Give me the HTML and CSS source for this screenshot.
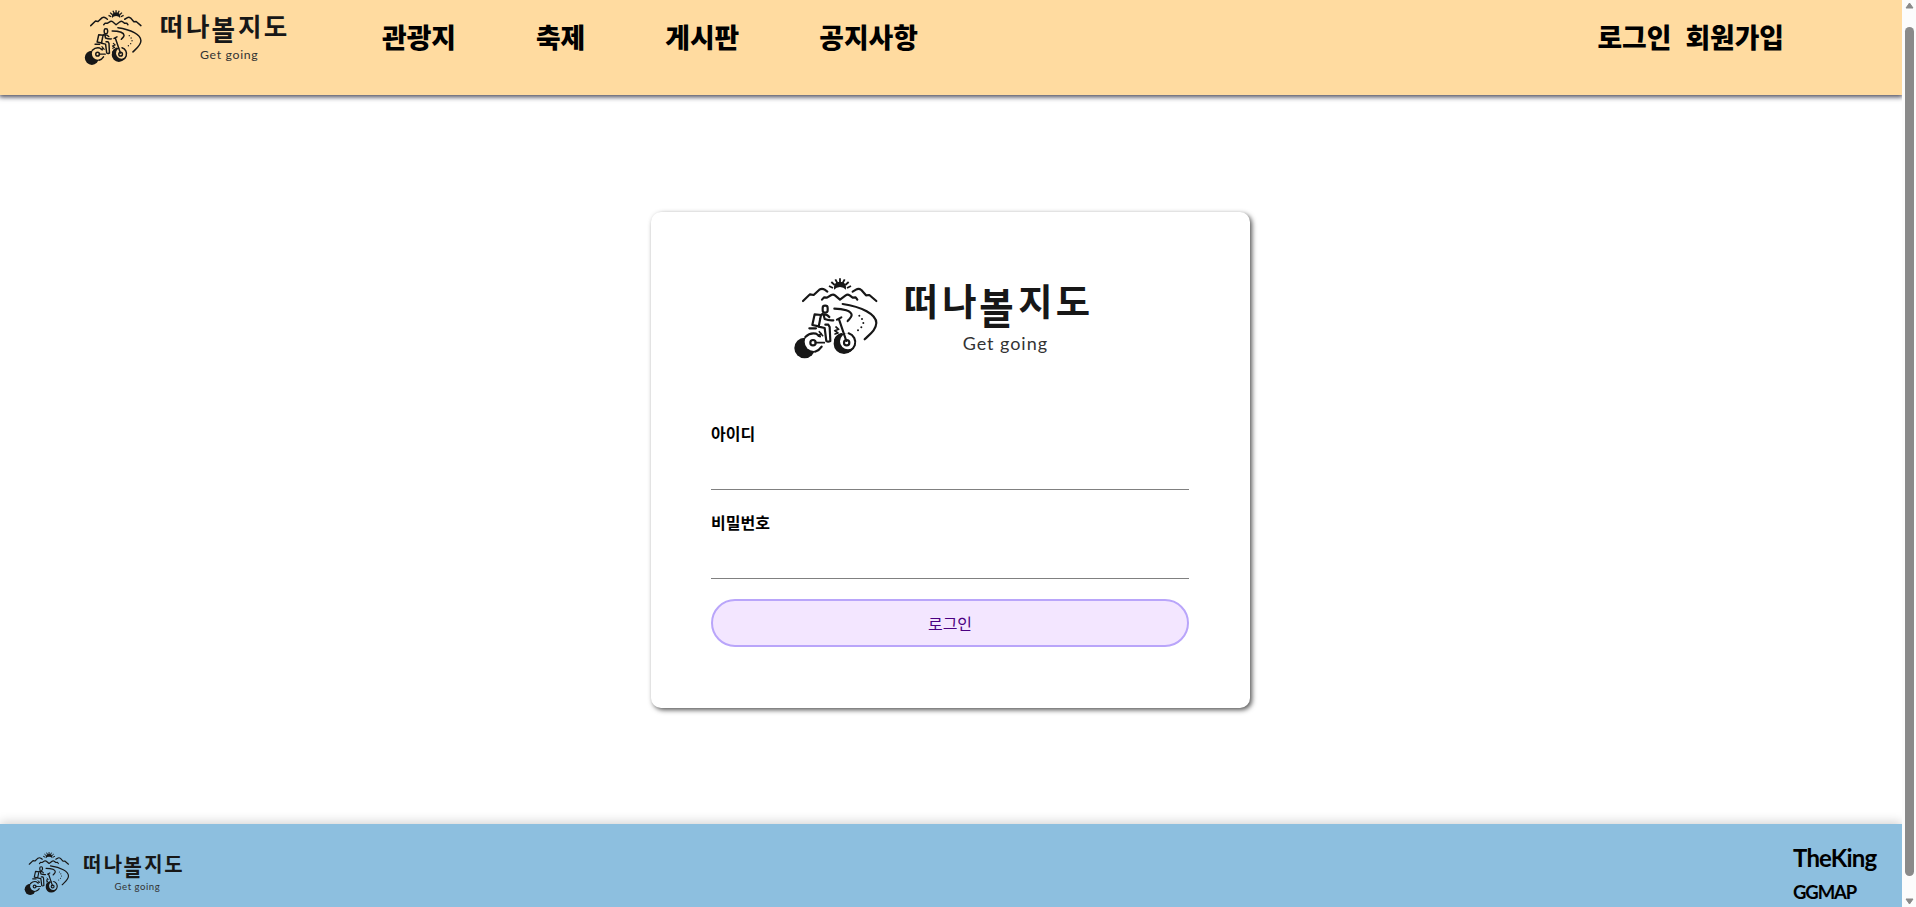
FILE: index.html
```html
<!DOCTYPE html>
<html lang="ko">
<head>
<meta charset="utf-8">
<title>떠나볼지도</title>
<link rel="stylesheet" href="styles.css">
</head>
<body>
<svg class="defs" aria-hidden="true">
  <defs>
    <mask id="rear-cut" maskUnits="userSpaceOnUse" x="0" y="0" width="320" height="315">
      <rect width="320" height="315" fill="#fff"/>
      <circle cx="101" cy="231" r="27" fill="#000"/>
    </mask>
    <mask id="front-cut" maskUnits="userSpaceOnUse" x="0" y="0" width="320" height="315">
      <rect width="320" height="315" fill="#fff"/>
      <circle cx="204" cy="229" r="24" fill="#000"/>
    </mask>
    <symbol id="rider" viewBox="0 0 320 315">
      <g fill="none" stroke="#171717" stroke-width="6.5" stroke-linecap="round" stroke-linejoin="round">
        <path d="M69 108L90 88L101 90L118 74Q126 69 134 74L142 80"/>
        <path d="M126 104L132 97L141 98L154 90Q160 87 165 91L180 104L197 91Q203 87 209 91L218 98L227 97L232 104"/>
        <path d="M218 80L228 74Q236 69 244 75L258 91L268 90L289 108"/>
        <path d="M188 117C245 125 289 148 289 174C288 195 270 207 254 223"/>
        <path d="M163 131C190 131 214 138 215 150C215 159 207 162 203 168"/>
        <rect x="128" y="122" width="15" height="21" rx="7"/>
        <path d="M124 150L104 148L97 180L117 184"/>
        <path d="M128 146Q122 148 121 160L116 185L134 189L139 228Q144 232 151 228L149 186L145 179H136M131 150L134 162Q146 167 160 166M134 148Q143 149 148 156"/>
        <path d="M171 164L184 157M177 163L199 228M88 190H108"/>
        <path d="M106 233H133M118 200L128 212M124 206L115 213M168 186L176 193L164 197L174 204L165 207" stroke-width="5"/>
        <circle cx="99" cy="233" r="8"/>
        <path d="M76 216Q90 202 108 206L120 214M125 245Q118 256 105 260"/>
        <circle cx="200" cy="233" r="8"/>
        <path d="M206 205A28 28 0 1 1 188 258M165 225Q170 211 184 207"/>
      </g>
      <g fill="#171717">
        <circle cx="74" cy="249" r="31" mask="url(#rear-cut)"/>
        <circle cx="192" cy="236" r="31" mask="url(#front-cut)"/>
        <path d="M162 74Q159 50 180 50Q201 50 198 74L190 68L180 66L170 68Z"/>
        <circle cx="238" cy="152" r="3"/><circle cx="246" cy="162" r="3"/><circle cx="250" cy="174" r="3"/><circle cx="244" cy="187" r="3"/><circle cx="234" cy="196" r="3"/>
      </g>
      <path d="M180 54V40M172 54L166 43M188 54L194 43M164 60L154 51M196 60L206 51M159 69L147 63M201 69L213 63" fill="none" stroke="#171717" stroke-width="5.500"/>
    </symbol>
  </defs>
</svg>
<div class="window">
  <div class="page">
    <header class="header">
      <a class="header-logo"><svg class="logo" viewBox="0 0 960 315">
        <use href="#rider" width="320" height="315"/>
        <g class="logo-name"><text x="371" y="152">떠</text><text x="487" y="152">나</text><text transform="translate(598 176) scale(1 1.13)">볼</text><text x="715" y="152">지</text><text x="827" y="152">도</text></g>
        <text class="logo-sub" x="548" y="254" textLength="253">Get going</text>
      </svg></a>
      <nav class="menu"><a>관광지</a><a>축제</a><a>게시판</a><a>공지사항</a></nav>
      <div class="account"><a>로그인</a><a>회원가입</a></div>
    </header>
    <main class="main">
      <form class="card">
        <svg class="logo card-logo" viewBox="0 0 960 315">
          <use href="#rider" width="320" height="315"/>
          <g class="logo-name"><text x="371" y="152">떠</text><text x="487" y="152">나</text><text transform="translate(598 176) scale(1 1.13)">볼</text><text x="715" y="152">지</text><text x="827" y="152">도</text></g>
          <text class="logo-sub" x="548" y="254" textLength="253">Get going</text>
        </svg>
        <label class="field"><span>아이디</span><input type="text"></label>
        <label class="field"><span>비밀번호</span><input type="password"></label>
        <button class="submit" type="button">로그인</button>
      </form>
    </main>
    <footer class="footer">
      <svg class="logo footer-logo" viewBox="0 0 960 315">
        <use href="#rider" width="320" height="315"/>
        <g class="logo-name"><text x="371" y="152">떠</text><text x="487" y="152">나</text><text transform="translate(598 176) scale(1 1.13)">볼</text><text x="715" y="152">지</text><text x="827" y="152">도</text></g>
        <text class="logo-sub" x="548" y="254" textLength="253">Get going</text>
      </svg>
      <div class="credits"><div class="team">TheKing</div><div class="project">GGMAP</div></div>
    </footer>
  </div>
  <div class="scrollbar">
    <svg width="9" height="7" viewBox="0 0 9 7"><path d="M4.500 1L8 6H1Z"/></svg>
    <div class="thumb"></div>
    <svg width="9" height="7" viewBox="0 0 9 7"><path d="M4.500 6L8 1H1Z"/></svg>
  </div>
</div>
</body>
</html>
```
FILE: styles.css
```css
* { box-sizing: border-box; }
body {
  margin: 0;
  overflow: hidden;
  background: #fff;
  color: #000;
  font-family: "Noto Sans CJK KR", sans-serif;
}
.defs { display: block; width: 0; height: 0; }
.window { display: flex; height: 907px; }
.page { flex: 1; display: flex; flex-direction: column; height: 907px; overflow: hidden; }

.logo { display: block; aspect-ratio: 960 / 315; overflow: visible; }
.logo-name { font-size: 112px; font-weight: 700; fill: #171717; }
.logo-sub { font-family: Lato, sans-serif; font-size: 54px; font-weight: 400; fill: #333; }

.header {
  display: flex;
  flex: none;
  height: 95px;
  padding: 1px 118px 0 75px;
  background: #ffdba0;
  box-shadow: 0 1px 5px 1px #445;
  font-size: 26.8px;
  font-weight: 900;
  line-height: 40px;
}
.header-logo .logo { width: 219px; }
.menu { display: flex; gap: 80px; padding: 16px 0 0 88px; }
.account { display: flex; gap: 14px; padding-top: 16px; margin-left: auto; }

.main { flex: 1; padding-top: 117px; }
.card {
  display: flex;
  flex-direction: column;
  width: 599px;
  height: 496px;
  margin: 0 0 0 651px;
  padding: 53px 61px 60px 60px;
  border-radius: 10px;
  background: #fff;
  box-shadow: 2px 2px 5px #555;
}
.card-logo { width: 320px; margin: 0 0 51px 69px; }
.field { display: block; height: 89px; font-size: 16px; font-weight: 700; line-height: 24px; }
.field span { display: block; }
.field input {
  display: block;
  width: 100%;
  height: 45px;
  border: 0;
  border-bottom: 1px solid #808080;
  outline: 0;
  background: transparent;
}
.submit {
  height: 48px;
  border: 2px solid #b9a5fa;
  border-radius: 24px;
  background: #f3e6ff;
  color: #4b0082;
  font: 400 16px/24px "Noto Sans CJK KR", sans-serif;
}

.footer {
  display: flex;
  flex: none;
  align-items: flex-start;
  justify-content: space-between;
  height: 83px;
  padding: 21px 25px 0 17px;
  background: #8dbfdf;
  box-shadow: 0 -2px 10px rgba(0, 0, 0, .18);
}
.footer-logo { width: 171px; }
.credits { width: 84px; font-family: Lato, "Noto Sans", sans-serif; font-weight: 700; }
.team { font-size: 24px; line-height: 30px; margin-top: -2px; letter-spacing: -.8px; }
.project { font-size: 18.5px; line-height: 24px; margin-top: 7px; letter-spacing: -1.1px; }

.scrollbar {
  display: flex;
  flex: none;
  flex-direction: column;
  align-items: center;
  justify-content: space-between;
  width: 14px;
  padding: 2px 0;
  background: #fcfcfc;
}
.scrollbar path { fill: #8a8a8a; stroke: #8a8a8a; stroke-linejoin: round; }
.thumb { width: 9px; height: 849px; margin-bottom: 5px; border-radius: 5px; background: #8a8a8a; }
```
